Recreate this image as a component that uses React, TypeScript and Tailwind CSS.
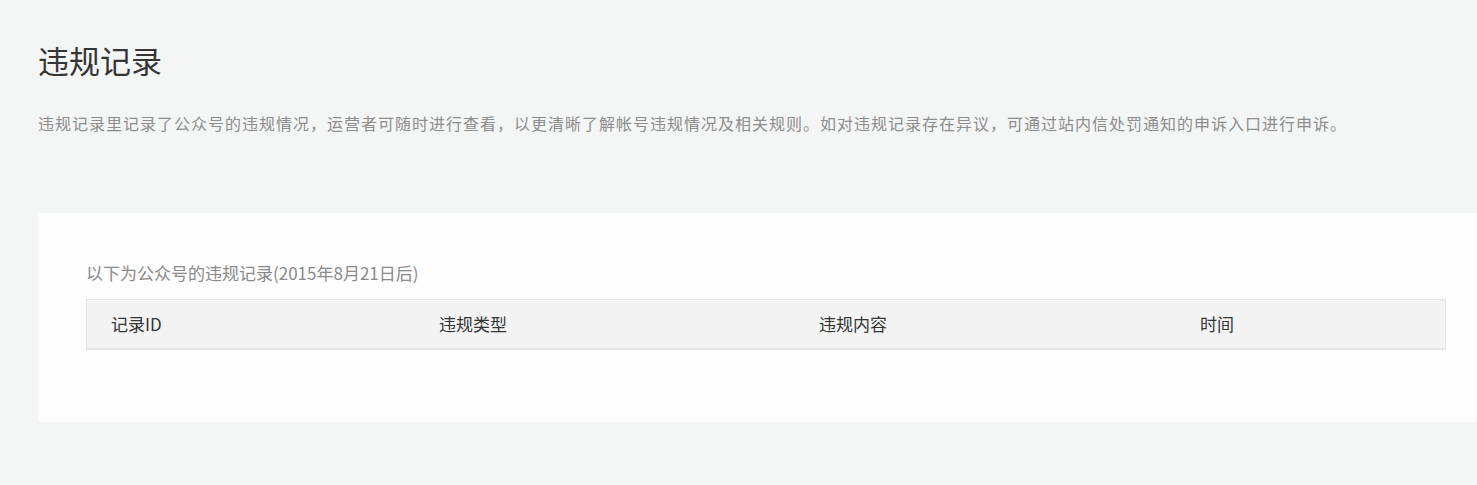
const font = { fontFamily: '"Noto Sans CJK SC", "Noto Sans", sans-serif' }

const columns = [
  { label: '记录ID', width: 'w-[328px]' },
  { label: '违规类型', width: 'w-[380px]' },
  { label: '违规内容', width: 'w-[381px]' },
  { label: '时间', width: 'flex-1' },
]

export default function App() {
  return (
    <div className="min-h-[485px] w-full overflow-hidden bg-[#f4f5f5]" style={font}>
      <div className="pl-[38px] pt-[38px]">
        <h1 className="text-[31px] leading-[44px] font-normal text-[#353535]">违规记录</h1>
        <p className="mt-[29px] whitespace-nowrap text-[16px] leading-[24px] tracking-[1px] text-[#8d8d8d]">
          违规记录里记录了公众号的违规情况，运营者可随时进行查看，以更清晰了解帐号违规情况及相关规则。如对违规记录存在异议，可通过站内信处罚通知的申诉入口进行申诉。
        </p>

        <div className="mt-[78px] w-[1456px] bg-[#fdfdfd] px-[48px] pt-[48px] pb-[72px]">
          <div className="text-[17px] leading-[24px] text-[#8a8a8a]">以下为公众号的违规记录(2015年8月21日后)</div>
          <div className="mt-[14px] flex h-[51px] items-center border border-b-2 border-[#e4e4e5] bg-[#f3f3f4] text-[17px] text-[#353535]">
            {columns.map((c) => (
              <div key={c.label} className={`${c.width} pl-[24px]`}>
                {c.label}
              </div>
            ))}
          </div>
        </div>
      </div>
    </div>
  )
}
